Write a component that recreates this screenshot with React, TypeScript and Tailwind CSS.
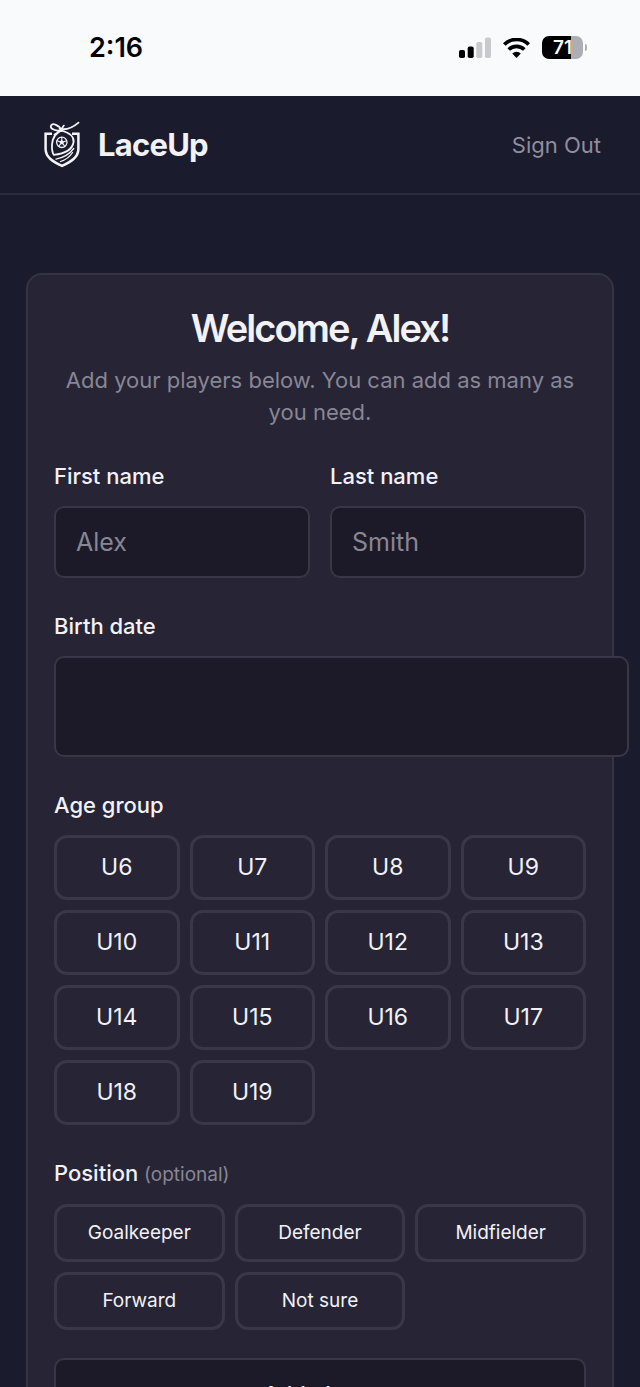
import type { InputHTMLAttributes, ReactNode } from "react";

const ageGroups = ["U6", "U7", "U8", "U9", "U10", "U11", "U12", "U13", "U14", "U15", "U16", "U17", "U18", "U19"];
const positions = ["Goalkeeper", "Defender", "Midfielder", "Forward", "Not sure"];

function StatusBar() {
  return (
    <div className="flex h-24 shrink-0 items-center justify-between bg-[#f9fafc] pr-[53px] pb-px pl-[89px] text-black">
      <span className="text-[27px] leading-8 font-semibold">2:16</span>
      <div className="flex items-center gap-3">
        <svg className="h-[21px] w-8" viewBox="0 0 32 21" aria-hidden="true">
          <rect x="0" y="13" width="6" height="8" rx="1.8" fill="#000" />
          <rect x="8.7" y="9.5" width="6" height="11.5" rx="1.8" fill="#000" />
          <rect x="17.3" y="5" width="6" height="16" rx="1.8" fill="#c9c9ce" />
          <rect x="26" y="0.5" width="6" height="20.5" rx="1.8" fill="#c9c9ce" />
        </svg>
        <svg className="h-5 w-[27px]" viewBox="0 0 27 20" aria-hidden="true">
          <g fill="none" stroke="#000" strokeWidth="3.7">
            <path d="M1.300 6.500a17.400 17.400 0 0 1 24.400 0" />
            <path d="M5.700 11.500a11.200 11.200 0 0 1 15.600 0" />
          </g>
          <path d="M13.500 20l-4.300-4.400a6.200 6.200 0 0 1 8.600 0z" fill="#000" />
        </svg>
        <div className="flex items-center gap-[2px]">
          <div className="flex h-[23px] w-[41px] items-center justify-center rounded-[7px] bg-linear-to-r from-black from-71% to-[#adadb5] to-71% text-[19px] leading-5 font-semibold text-white">
            71
          </div>
          <span className="h-[7px] w-[2px] rounded-r-full bg-[#adadb5]" />
        </div>
      </div>
    </div>
  );
}

function Logo() {
  return (
    <svg className="h-12 w-10" viewBox="0 0 40 48" fill="none" stroke="#f4f4f7" strokeLinecap="round" strokeLinejoin="round" aria-hidden="true">
      <path d="M11 12.800H4.600V28c0 8.300 7.400 12.800 16.400 16.800C30 40.800 37.400 36.300 37.400 28V12.800H31" strokeWidth="2.500" strokeLinecap="butt" strokeLinejoin="miter" />
      <path d="M20.500 10C15.500 9.800 9.300 8.500 9.800 5.200 10.500 1.200 17.500 3.500 21 9.500" strokeWidth="1.800" />
      <path d="M13.500 13.500C17.500 11.500 21 7.500 22.800 4.600" strokeWidth="1.800" />
      <path d="M18.500 7.800c6.500 1.500 13-1 19-6.200" strokeWidth="1.800" />
      <path d="M20.500 9.500C16 11.500 11.500 16 11 23.500c-.2 4.500.2 8 1.700 10.300C21 33 31 30.500 32.600 21c.5-5.500-5-9.500-12.100-11.500" strokeWidth="1.800" />
      <path d="M15 38.200c8-1.700 13.500-5 17.700-10.700M19.500 40.500c5-1.500 9.500-5 12-9" strokeWidth="1.300" />
      <circle cx="20.800" cy="21.300" r="5.200" strokeWidth="1.300" />
      <path d="M20.800 18.900l2.300 1.700-.9 2.700h-2.800l-.9-2.700z" fill="#f4f4f7" stroke="none" />
      <path d="M20.800 16.300v3M25.500 19.800l-2.600.9M23.700 25.300l-1.500-2.200M17.900 25.300l1.500-2.200M16.100 19.800l2.600.9" strokeWidth="1.100" />
    </svg>
  );
}

type FieldProps = InputHTMLAttributes<HTMLInputElement> & { id: string; label: string };

function Field({ id, label, className = "w-full h-[72px]", ...rest }: FieldProps) {
  return (
    <div className="flex min-w-0 flex-col gap-[14px]">
      <label htmlFor={id} className="text-[22px] leading-8 font-medium">
        {label}
      </label>
      <input
        id={id}
        className={`${className} rounded-[10px] border-2 border-[#393747] bg-[#1c1a29] px-5 text-[25px] outline-none placeholder:text-[#888694] focus:border-[#888694]`}
        {...rest}
      />
    </div>
  );
}

function Choice({ className, children }: { className: string; children: ReactNode }) {
  return (
    <button type="button" className={`${className} rounded-[13px] border-3 border-[#3a3848] text-center hover:bg-[#2e2c3e]`}>
      {children}
    </button>
  );
}

export default function App() {
  return (
    <div className="flex h-screen flex-col overflow-hidden bg-[#1a1b2d] font-['Inter','Liberation_Sans',sans-serif] text-[#f1f1f6]">
      <StatusBar />
      <header className="flex h-[99px] shrink-0 items-center justify-between border-b-2 border-[#2d2c3a] pr-[39px] pl-[41px]">
        <a href="#" className="flex items-center gap-[17px]">
          <Logo />
          <span className="text-[31px] leading-10 font-bold tracking-tight">LaceUp</span>
        </a>
        <button type="button" className="text-[22px] leading-8 text-[#908e9b]">
          Sign Out
        </button>
      </header>
      <main className="min-h-0 flex-1 overflow-y-auto px-[26px] pt-[78px] pb-20 [scrollbar-width:none]">
        <form className="flex flex-col rounded-2xl border-2 border-[#363444] bg-[#262435] px-[26px] pt-[29px] pb-8">
          <h1 className="text-center text-[38px] leading-[48px] font-semibold tracking-tighter">Welcome, Alex!</h1>
          <p className="mt-3 text-center text-[22px] leading-8 text-[#888694]">
            Add your players below. You can add as many as you need.
          </p>
          <div className="mt-8 grid grid-cols-2 gap-5">
            <Field id="first-name" label="First name" placeholder="Alex" />
            <Field id="last-name" label="Last name" placeholder="Smith" />
          </div>
          <div className="mt-8">
            <Field id="birth-date" label="Birth date" inputMode="numeric" className="h-[101px] w-[108%]" />
          </div>
          <fieldset className="mt-8">
            <legend className="text-[22px] leading-8 font-medium">Age group</legend>
            <div className="mt-[14px] grid grid-cols-4 gap-[10px]">
              {ageGroups.map((group) => (
                <Choice key={group} className="h-[65px] text-[23px]">
                  {group}
                </Choice>
              ))}
            </div>
          </fieldset>
          <fieldset className="mt-8">
            <legend className="text-[22px] leading-8 font-medium">
              Position <span className="text-[19px] font-normal text-[#888694]">(optional)</span>
            </legend>
            <div className="mt-[13px] grid grid-cols-3 gap-[10px]">
              {positions.map((position) => (
                <Choice key={position} className="h-[58px] text-[19px]">
                  {position}
                </Choice>
              ))}
            </div>
          </fieldset>
          <button type="button" className="mt-7 h-[72px] rounded-[10px] border-2 border-[#393747] bg-[#1c1a29] text-[22px] font-medium">
            Add player
          </button>
        </form>
      </main>
    </div>
  );
}
